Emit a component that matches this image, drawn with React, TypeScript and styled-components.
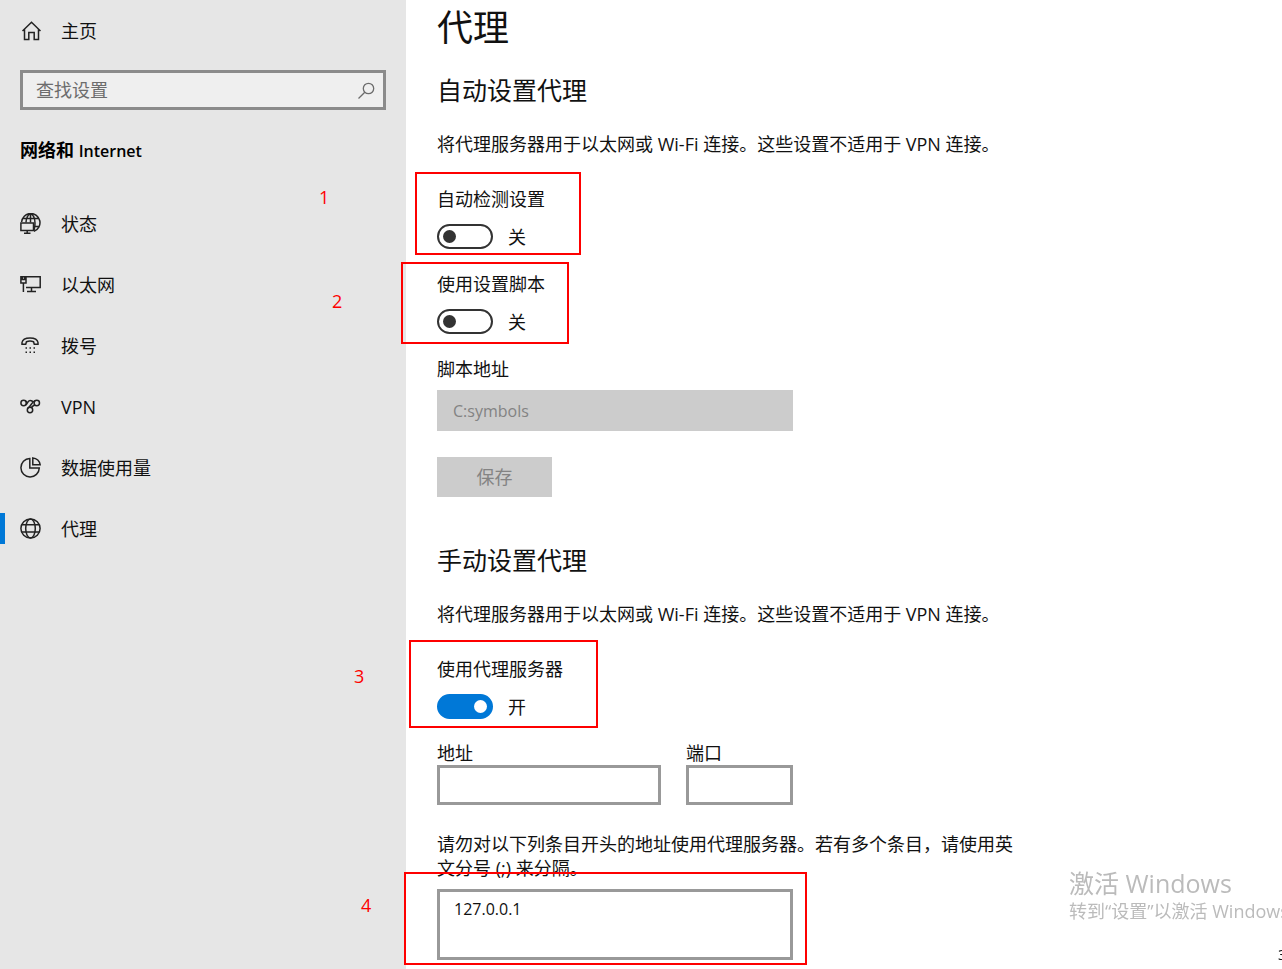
import React, { useState } from "react";
import styled, { createGlobalStyle } from "styled-components";

const GlobalStyle = createGlobalStyle`
  *, *::before, *::after { box-sizing: border-box; }
  html, body { margin: 0; padding: 0; }
  body {
    background: #fff;
    color: #111;
    font-family: "Open Sans", "Noto Sans CJK SC", sans-serif;
    font-size: 18px;
    line-height: 24px;
    overflow-x: hidden;
  }
  button, input, textarea { font: inherit; color: inherit; }
  h1, h2, p { margin: 0; font-weight: 400; }
`;

const Page = styled.div`
  display: flex;
  min-height: 100vh;
`;

const Sidebar = styled.aside`
  flex: 0 0 406px;
  background: #e6e6e6;
`;

const NavLink = styled.a<{ $active?: boolean }>`
  display: flex;
  align-items: center;
  gap: 20px;
  height: 61px;
  padding-left: 20px;
  color: inherit;
  text-decoration: none;
  background: ${(p) =>
    p.$active
      ? "linear-gradient(#0078d7, #0078d7) left center / 5px 31px no-repeat"
      : "none"};
`;

const Icon = styled.svg`
  flex: none;
  width: 21px;
  height: 21px;
  fill: none;
  stroke: #222;
  stroke-width: 1.5;
`;

const SearchBox = styled.label`
  display: flex;
  align-items: center;
  height: 40px;
  margin: 9px 20px 0;
  padding: 0 7px 0 13px;
  border: 3px solid #8b8b8b;
  background: #efefef;
`;

const ThinIcon = styled(Icon)`
  stroke: #6c6c6c;
  stroke-width: 1.3;
`;

const SearchInput = styled.input`
  flex: 1;
  min-width: 0;
  padding: 0;
  border: 0;
  outline: 0;
  background: none;
  &::placeholder { color: #6c6c6c; opacity: 1; }
`;

const SidebarTitle = styled.h2`
  margin: 28px 20px 30px;
  color: #000;
  font-size: 18px;
  font-weight: 700;
  line-height: 24px;
`;

const LatinWord = styled.span`
  font-size: 16px;
  font-weight: 600;
`;

const Main = styled.main`
  flex: 1;
  min-width: 0;
  padding: 4px 31px 9px;
`;

const PageTitle = styled.h1`
  font-size: 36px;
  line-height: 48px;
`;

const SectionTitle = styled.h2`
  margin: 21px 0 25px;
  font-size: 25px;
  line-height: 34px;
`;

const Section = styled.section`
  & + & { margin-top: 46px; }
`;

const ToggleGroup = styled.div`
  position: relative;
  width: 356px;
  margin-top: 31px;
  & + & { margin-top: 23px; }
`;

const FieldLabel = styled.label`
  display: block;
`;

const ToggleRow = styled.div`
  display: flex;
  align-items: center;
  gap: 15px;
  height: 25px;
  margin-top: 13px;
`;

const Switch = styled.input`
  appearance: none;
  display: flex;
  align-items: center;
  width: 56px;
  height: 25px;
  margin: 0;
  padding: 0 4px;
  border: 2px solid #333;
  border-radius: 13px;
  background: #fff;
  &::before {
    content: "";
    width: 13px;
    height: 13px;
    border-radius: 50%;
    background: #333;
  }
  &:checked {
    justify-content: flex-end;
    border-color: #0078d7;
    background: #0078d7;
  }
  &:checked::before { background: #fff; }
`;

const Callout = styled.div<{ $box: [number, number, number, number] }>`
  position: absolute;
  z-index: 2;
  left: ${(p) => p.$box[0]}px;
  top: ${(p) => p.$box[1]}px;
  width: ${(p) => p.$box[2]}px;
  height: ${(p) => p.$box[3]}px;
  border: 2px solid #fe0000;
  pointer-events: none;
`;

const CalloutNumber = styled.span<{ $at: [number, number] }>`
  position: absolute;
  z-index: 2;
  left: ${(p) => p.$at[0]}px;
  top: ${(p) => p.$at[1]}px;
  color: #fe0000;
`;

const Field = styled.div<{ $width: number }>`
  width: ${(p) => p.$width}px;
`;

const ScriptField = styled(Field)`
  margin-top: 23px;
`;

const DisabledInput = styled.input`
  display: block;
  width: 100%;
  height: 41px;
  margin-top: 9px;
  padding: 0 16px;
  border: 0;
  background: #ccc;
  color: #838383;
  font-size: 16px;
`;

const SaveButton = styled.button`
  width: 115px;
  height: 40px;
  margin-top: 26px;
  border: 0;
  background: #ccc;
  color: #838383;
`;

const FieldRow = styled.div`
  display: flex;
  gap: 25px;
  margin-top: 22px;
`;

const TextInput = styled.input`
  display: block;
  width: 100%;
  height: 40px;
  padding: 0 13px;
  border: 3px solid #999;
  background: #fff;
  font-size: 16px;
`;

const Exceptions = styled.div`
  position: relative;
  max-width: 582px;
  margin-top: 27px;
`;

const TextArea = styled.textarea`
  display: block;
  width: 356px;
  height: 71px;
  margin-top: 9px;
  padding: 5px 14px;
  border: 3px solid #999;
  background: #fff;
  font-size: 16px;
  resize: none;
`;

const Watermark = styled.div`
  position: fixed;
  left: calc(100% - 213px);
  bottom: 46px;
  color: #bbb;
  white-space: nowrap;
  pointer-events: none;
`;

const WatermarkTitle = styled.div`
  font-size: 25px;
  line-height: 32px;
`;

const ClockEdge = styled.div`
  position: fixed;
  left: calc(100% - 4px);
  bottom: 5px;
  font-size: 14px;
  line-height: 18px;
`;

const HomeIcon = () => (
  <Icon viewBox="0 0 21 21">
    <path d="M2.500 11 11.500 2.300 20.500 11M4.500 9.500V19.500H8.800V12.500H14.200V19.500H18.500V9.500" />
  </Icon>
);

const StatusIcon = () => (
  <Icon viewBox="0 0 21 21">
    <path d="M1.600 9A9.200 9.200 0 1 1 14 18.300M3 5.500H18M14 13.500H18.800M6 9.500C6.200 5 8 1 10.500 1S15 5 15 10 14.500 15 14 17M10.500 1V9.500" />
    <path d="M.9 10H13.500V17.500H.9ZM7.200 17.500V20M4 20.200H10.500" />
  </Icon>
);

const EthernetIcon = () => (
  <Icon viewBox="0 0 21 21">
    <path d="M6 2.800H20.200V13.500H6M11.500 13.500V17.500M7 17.500H16" />
    <path d="M.9 2.800H6V9H.9ZM2.300 3V5.500H4.600V3M3.400 9V18" />
  </Icon>
);

const DialIcon = () => (
  <Icon viewBox="0 0 21 21">
    <path d="M2 9.300V7.500C2.500 4.500 6 3 10 3S17.500 4.500 18 7.500V9.300H14.300L13.500 6.700C11.500 6 8.500 6 6.500 6.700L5.700 9.300Z" />
    <path d="M5.500 13H15M5.500 17.300H15" strokeDasharray="1.500 2.500" />
  </Icon>
);

const VpnIcon = () => (
  <Icon viewBox="0 0 21 21">
    <circle cx="3.600" cy="7" r="2.700" />
    <circle cx="16.800" cy="7" r="2.700" />
    <circle cx="10" cy="14" r="2.700" />
    <path d="M5.500 9C7.500 8.500 7.500 4.500 10 4.500S12.500 6 12.500 6M15.200 4.800C12.500 5 11.500 9 8 12.300M14.800 9C13 10 12.500 10 11.500 11.500M5.500 5 8 7" />
  </Icon>
);

const DataIcon = () => (
  <Icon viewBox="0 0 21 21">
    <path d="M9.800 1.500A9.200 9.200 0 1 0 19.300 11H9.800Z" />
    <path d="M12.800.9V7.800H20.200A7.800 7.800 0 0 0 12.800.9Z" />
  </Icon>
);

const ProxyIcon = () => (
  <Icon viewBox="0 0 21 21">
    <circle cx="10.500" cy="10.500" r="9.600" />
    <ellipse cx="10.500" cy="10.500" rx="4.800" ry="9.600" />
    <path d="M1.700 6.700H19.300M1.700 14H19.300" />
  </Icon>
);

const SearchIcon = () => (
  <ThinIcon viewBox="0 0 21 21">
    <circle cx="13.500" cy="8.500" r="5.200" />
    <path d="M9.800 12.300 3.500 18.500" />
  </ThinIcon>
);

const navItems = [
  { label: "状态", icon: StatusIcon },
  { label: "以太网", icon: EthernetIcon },
  { label: "拨号", icon: DialIcon },
  { label: "VPN", icon: VpnIcon },
  { label: "数据使用量", icon: DataIcon },
  { label: "代理", icon: ProxyIcon },
];

interface ToggleProps {
  id: string;
  label: string;
  initial?: boolean;
  children?: React.ReactNode;
}

function Toggle({ id, label, initial = false, children }: ToggleProps) {
  const [on, setOn] = useState(initial);
  return (
    <ToggleGroup>
      <FieldLabel htmlFor={id}>{label}</FieldLabel>
      <ToggleRow>
        <Switch
          id={id}
          type="checkbox"
          role="switch"
          checked={on}
          onChange={(e) => setOn(e.target.checked)}
        />
        <span>{on ? "开" : "关"}</span>
      </ToggleRow>
      {children}
    </ToggleGroup>
  );
}

const usage = "将代理服务器用于以太网或 Wi-Fi 连接。这些设置不适用于 VPN 连接。";

export default function App() {
  return (
    <>
      <GlobalStyle />
      <Page lang="zh-CN">
        <Sidebar>
          <NavLink href="#home">
            <HomeIcon />
            主页
          </NavLink>
          <SearchBox>
            <SearchInput type="text" placeholder="查找设置" aria-label="查找设置" />
            <SearchIcon />
          </SearchBox>
          <SidebarTitle>
            网络和 <LatinWord>Internet</LatinWord>
          </SidebarTitle>
          <nav>
            {navItems.map(({ label, icon: ItemIcon }) => (
              <NavLink key={label} href={`#${label}`} $active={label === "代理"}>
                <ItemIcon />
                {label}
              </NavLink>
            ))}
          </nav>
        </Sidebar>
        <Main>
          <PageTitle>代理</PageTitle>
          <Section>
            <SectionTitle>自动设置代理</SectionTitle>
            <p>{usage}</p>
            <Toggle id="detect" label="自动检测设置">
              <Callout $box={[-22, -15, 166, 83]} />
              <CalloutNumber $at={[-118, -2]}>1</CalloutNumber>
            </Toggle>
            <Toggle id="script" label="使用设置脚本">
              <Callout $box={[-36, -10, 168, 82]} />
              <CalloutNumber $at={[-105, 17]}>2</CalloutNumber>
            </Toggle>
            <ScriptField $width={356}>
              <FieldLabel htmlFor="script-url">脚本地址</FieldLabel>
              <DisabledInput id="script-url" type="text" value="C:symbols" disabled />
            </ScriptField>
            <SaveButton type="button" disabled>
              保存
            </SaveButton>
          </Section>
          <Section>
            <SectionTitle>手动设置代理</SectionTitle>
            <p>{usage}</p>
            <Toggle id="proxy" label="使用代理服务器" initial>
              <Callout $box={[-28, -17, 189, 88]} />
              <CalloutNumber $at={[-83, 7]}>3</CalloutNumber>
            </Toggle>
            <FieldRow>
              <Field $width={224}>
                <FieldLabel htmlFor="address">地址</FieldLabel>
                <TextInput id="address" type="text" />
              </Field>
              <Field $width={107}>
                <FieldLabel htmlFor="port">端口</FieldLabel>
                <TextInput id="port" type="text" />
              </Field>
            </FieldRow>
            <Exceptions>
              <FieldLabel htmlFor="exceptions">
                请勿对以下列条目开头的地址使用代理服务器。若有多个条目，请使用英文分号 (;) 来分隔。
              </FieldLabel>
              <TextArea id="exceptions" defaultValue="127.0.0.1" />
              <Callout $box={[-33, 40, 403, 93]} />
              <CalloutNumber $at={[-76, 61]}>4</CalloutNumber>
            </Exceptions>
          </Section>
        </Main>
      </Page>
      <Watermark lang="zh-CN">
        <WatermarkTitle>激活 Windows</WatermarkTitle>
        <div>转到“设置”以激活 Windows。</div>
      </Watermark>
      <ClockEdge>3</ClockEdge>
    </>
  );
}
